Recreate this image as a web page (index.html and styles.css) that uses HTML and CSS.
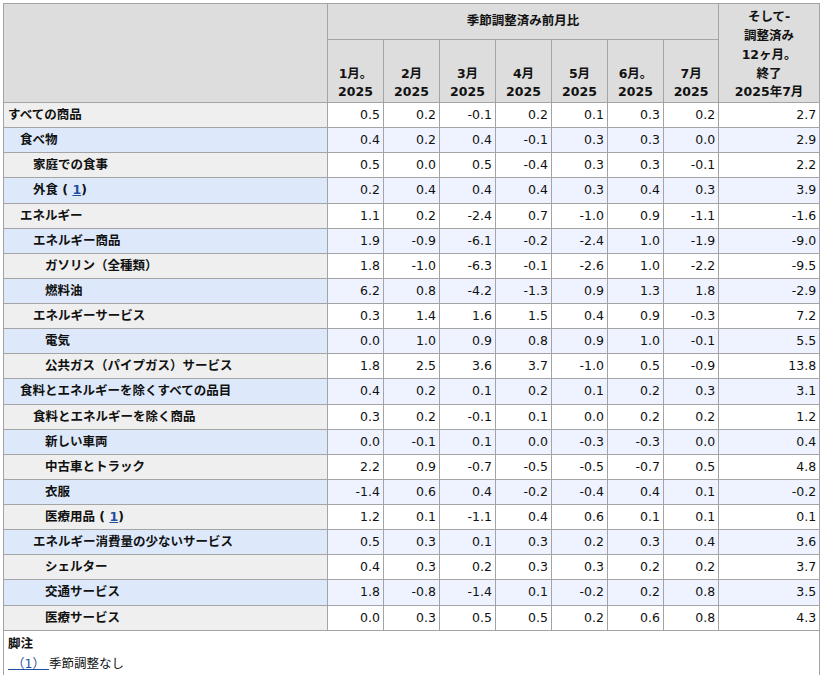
FILE: index.html
```html
<!DOCTYPE html>
<html lang="ja">
<head>
<meta charset="utf-8">
<title>CPI</title>
<link rel="stylesheet" href="styles.css">
</head>
<body>
<div class="wrap">
<table class="cpi">
<colgroup>
<col class="c-stub"><col class="c-m"><col class="c-m"><col class="c-m"><col class="c-m"><col class="c-m"><col class="c-m"><col class="c-m7"><col class="c-last">
</colgroup>
<thead>
<tr class="hr1">
<th class="hd-stub" rowspan="2"></th>
<th class="hd-group" colspan="7">季節調整済み前月比</th>
<th class="hd-last" rowspan="2">そして-<br>調整済み<br>12ヶ月。<br>終了<br>2025年7月</th>
</tr>
<tr class="hr2">
<th class="hd-m">1月。<br>2025</th>
<th class="hd-m">2月<br>2025</th>
<th class="hd-m">3月<br>2025</th>
<th class="hd-m">4月<br>2025</th>
<th class="hd-m">5月<br>2025</th>
<th class="hd-m">6月。<br>2025</th>
<th class="hd-m">7月<br>2025</th>
</tr>
</thead>
<tbody>
<tr class="odd"><th class="l0">すべての商品</th><td>0.5</td><td>0.2</td><td>-0.1</td><td>0.2</td><td>0.1</td><td>0.3</td><td>0.2</td><td>2.7</td></tr>
<tr class="even"><th class="l1">食べ物</th><td>0.4</td><td>0.2</td><td>0.4</td><td>-0.1</td><td>0.3</td><td>0.3</td><td>0.0</td><td>2.9</td></tr>
<tr class="odd"><th class="l2">家庭での食事</th><td>0.5</td><td>0.0</td><td>0.5</td><td>-0.4</td><td>0.3</td><td>0.3</td><td>-0.1</td><td>2.2</td></tr>
<tr class="even"><th class="l2">外食 ( <a class="fn" href="#fn1">1</a>)</th><td>0.2</td><td>0.4</td><td>0.4</td><td>0.4</td><td>0.3</td><td>0.4</td><td>0.3</td><td>3.9</td></tr>
<tr class="odd"><th class="l1">エネルギー</th><td>1.1</td><td>0.2</td><td>-2.4</td><td>0.7</td><td>-1.0</td><td>0.9</td><td>-1.1</td><td>-1.6</td></tr>
<tr class="even"><th class="l2">エネルギー商品</th><td>1.9</td><td>-0.9</td><td>-6.1</td><td>-0.2</td><td>-2.4</td><td>1.0</td><td>-1.9</td><td>-9.0</td></tr>
<tr class="odd"><th class="l3">ガソリン（全種類）</th><td>1.8</td><td>-1.0</td><td>-6.3</td><td>-0.1</td><td>-2.6</td><td>1.0</td><td>-2.2</td><td>-9.5</td></tr>
<tr class="even"><th class="l3">燃料油</th><td>6.2</td><td>0.8</td><td>-4.2</td><td>-1.3</td><td>0.9</td><td>1.3</td><td>1.8</td><td>-2.9</td></tr>
<tr class="odd"><th class="l2">エネルギーサービス</th><td>0.3</td><td>1.4</td><td>1.6</td><td>1.5</td><td>0.4</td><td>0.9</td><td>-0.3</td><td>7.2</td></tr>
<tr class="even"><th class="l3">電気</th><td>0.0</td><td>1.0</td><td>0.9</td><td>0.8</td><td>0.9</td><td>1.0</td><td>-0.1</td><td>5.5</td></tr>
<tr class="odd"><th class="l3">公共ガス（パイプガス）サービス</th><td>1.8</td><td>2.5</td><td>3.6</td><td>3.7</td><td>-1.0</td><td>0.5</td><td>-0.9</td><td>13.8</td></tr>
<tr class="even"><th class="l1">食料とエネルギーを除くすべての品目</th><td>0.4</td><td>0.2</td><td>0.1</td><td>0.2</td><td>0.1</td><td>0.2</td><td>0.3</td><td>3.1</td></tr>
<tr class="odd"><th class="l2">食料とエネルギーを除く商品</th><td>0.3</td><td>0.2</td><td>-0.1</td><td>0.1</td><td>0.0</td><td>0.2</td><td>0.2</td><td>1.2</td></tr>
<tr class="even"><th class="l3">新しい車両</th><td>0.0</td><td>-0.1</td><td>0.1</td><td>0.0</td><td>-0.3</td><td>-0.3</td><td>0.0</td><td>0.4</td></tr>
<tr class="odd"><th class="l3">中古車とトラック</th><td>2.2</td><td>0.9</td><td>-0.7</td><td>-0.5</td><td>-0.5</td><td>-0.7</td><td>0.5</td><td>4.8</td></tr>
<tr class="even"><th class="l3">衣服</th><td>-1.4</td><td>0.6</td><td>0.4</td><td>-0.2</td><td>-0.4</td><td>0.4</td><td>0.1</td><td>-0.2</td></tr>
<tr class="odd"><th class="l3">医療用品 ( <a class="fn" href="#fn1">1</a>)</th><td>1.2</td><td>0.1</td><td>-1.1</td><td>0.4</td><td>0.6</td><td>0.1</td><td>0.1</td><td>0.1</td></tr>
<tr class="even"><th class="l2">エネルギー消費量の少ないサービス</th><td>0.5</td><td>0.3</td><td>0.1</td><td>0.3</td><td>0.2</td><td>0.3</td><td>0.4</td><td>3.6</td></tr>
<tr class="odd"><th class="l3">シェルター</th><td>0.4</td><td>0.3</td><td>0.2</td><td>0.3</td><td>0.3</td><td>0.2</td><td>0.2</td><td>3.7</td></tr>
<tr class="even"><th class="l3">交通サービス</th><td>1.8</td><td>-0.8</td><td>-1.4</td><td>0.1</td><td>-0.2</td><td>0.2</td><td>0.8</td><td>3.5</td></tr>
<tr class="odd"><th class="l3">医療サービス</th><td>0.0</td><td>0.3</td><td>0.5</td><td>0.5</td><td>0.2</td><td>0.6</td><td>0.8</td><td>4.3</td></tr>
</tbody>
<tfoot>
<tr>
<td class="foot" colspan="9">
<div class="foot-title">脚注</div>
<div class="foot-line" id="fn1"><a class="foot-link" href="#fn1">&nbsp;（1）&nbsp;</a>季節調整なし</div>
</td>
</tr>
</tfoot>
</table>
</div>
</body>
</html>
```

FILE: styles.css
```css
html, body {
  margin: 0;
  padding: 0;
  background: #ffffff;
}

body {
  font-family: "DejaVu Sans", "Noto Sans CJK JP", sans-serif;
  font-size: 12.5px;
  color: #111111;
}

.wrap {
  padding: 3px 0 0 3px;
}

.cpi {
  border-collapse: collapse;
  table-layout: fixed;
  width: 817px;
}

.c-stub { width: 324px; }
.c-m { width: 56px; }
.c-m7 { width: 55px; }
.c-last { width: 101px; }

.cpi th,
.cpi td {
  border: 1px solid #a4a4a4;
  padding: 0;
}

/* header */
.cpi thead th {
  background: #dddddd;
  font-weight: bold;
  text-align: center;
  line-height: 18.75px;
}

.hr1 { height: 36px; }
.hr2 { height: 63px; }

.hd-group {
  vertical-align: middle;
  padding-top: 2px;
}

.hd-m {
  vertical-align: bottom;
  padding: 0 2px 4px;
}

.hd-last {
  vertical-align: bottom;
  padding: 0 2px 4px;
}

/* body */
.cpi tbody th {
  text-align: left;
  font-weight: bold;
  line-height: 24.12px;
  white-space: nowrap;
}

.cpi tbody td {
  text-align: right;
  line-height: 24.12px;
  padding-right: 3px;
}

.odd th { background: #efefef; }
.odd td { background: #ffffff; }
.even th { background: #dde9fb; }
.even td { background: #eef3ff; }

.l0 { padding-left: 4px !important; }
.l1 { padding-left: 16px !important; }
.l2 { padding-left: 29px !important; }
.l3 { padding-left: 41px !important; }

.fn {
  color: #1f4fa0;
  text-decoration: underline;
}

/* footer */
.foot {
  background: #ffffff;
  padding: 3px 4px 2px !important;
  text-align: left;
  line-height: 20px;
}

.foot-title {
  font-weight: bold;
}

.foot-line {
  font-weight: normal;
}

.foot-link {
  color: #1f4fa0;
  text-decoration: underline;
}
```
